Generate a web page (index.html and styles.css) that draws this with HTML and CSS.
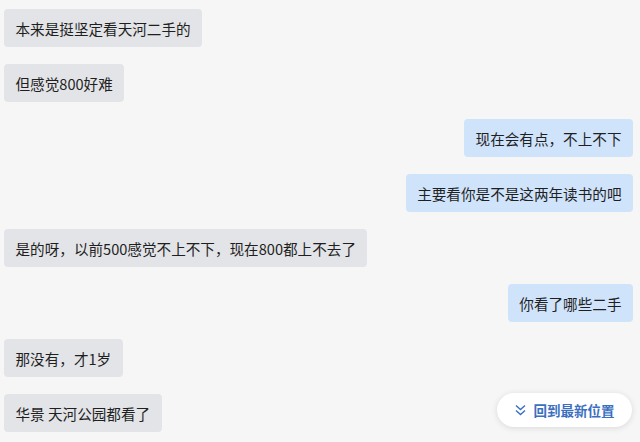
FILE: index.html
```html
<!DOCTYPE html>
<html lang="zh">
<head>
<meta charset="utf-8">
<link rel="stylesheet" href="styles.css">
</head>
<body>
<div class="chat">
  <div class="row left"><div class="bubble">本来是挺坚定看天河二手的</div></div>
  <div class="row left"><div class="bubble">但感觉800好难</div></div>
  <div class="row right"><div class="bubble">现在会有点，不上不下</div></div>
  <div class="row right"><div class="bubble">主要看你是不是这两年读书的吧</div></div>
  <div class="row left"><div class="bubble">是的呀，以前500感觉不上不下，现在800都上不去了</div></div>
  <div class="row right"><div class="bubble">你看了哪些二手</div></div>
  <div class="row left"><div class="bubble">那没有，才1岁</div></div>
  <div class="row left"><div class="bubble">华景 天河公园都看了</div></div>
</div>
<button class="jump">
  <svg class="chev" width="11" height="12" viewBox="0 0 11 12"><path d="M1 1.5 L5.5 5.5 L10 1.5 M1 6.5 L5.5 10.5 L10 6.5" fill="none" stroke="#3b6fc0" stroke-width="1.4"/></svg>
  <span>回到最新位置</span>
</button>
</body>
</html>
```
FILE: styles.css
```css
html, body {
  margin: 0;
  padding: 0;
  background: #f6f6f6;
  width: 640px;
  height: 442px;
  overflow: hidden;
  font-family: "Noto Sans CJK SC", "Noto Sans", sans-serif;
}
.chat {
  display: flex;
  flex-direction: column;
  gap: 17px;
  padding: 9px 7px 0 4px;
}
.row {
  display: flex;
}
.row.right {
  justify-content: flex-end;
}
.bubble {
  height: 38px;
  box-sizing: border-box;
  padding: 0 11.5px;
  display: flex;
  align-items: center;
  font-size: 14.6px;
  color: #1f1f1f;
  border-radius: 4px;
  background: #e3e4e7;
  white-space: nowrap;
}
.row.right .bubble {
  background: #cfe3fb;
}
.jump {
  position: absolute;
  left: 497px;
  top: 393px;
  width: 135px;
  height: 34px;
  border: none;
  border-radius: 17px;
  background: #ffffff;
  box-shadow: 0 1px 6px rgba(0,0,0,0.12);
  display: flex;
  align-items: center;
  justify-content: center;
  gap: 8px;
  padding: 0;
  font-family: "Noto Sans CJK SC", sans-serif;
  font-size: 13.5px;
  font-weight: bold;
  color: #3b6fc0;
}
.chev {
  display: block;
}
```
